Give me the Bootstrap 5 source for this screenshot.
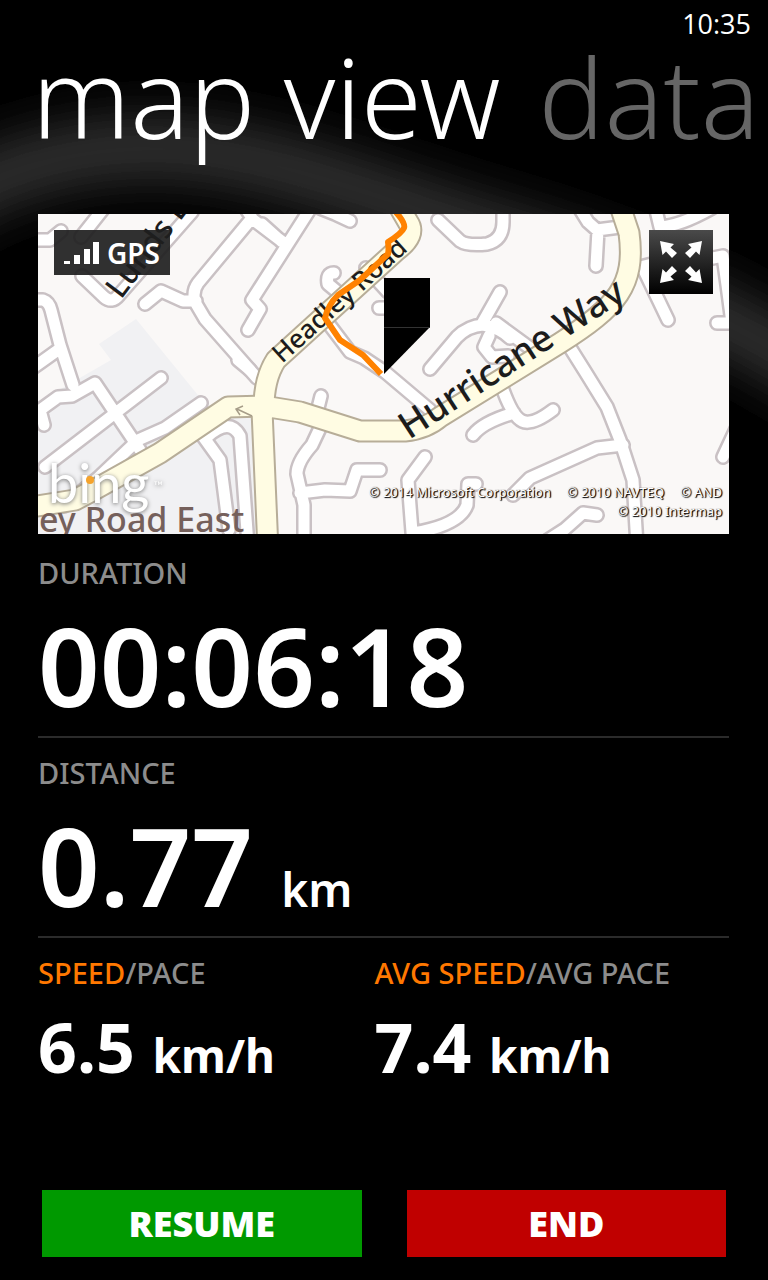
<!DOCTYPE html>
<html lang="en">
<head>
<meta charset="utf-8">
<meta name="viewport" content="width=device-width, initial-scale=1">
<title>Map view</title>
<link href="https://cdn.jsdelivr.net/npm/bootstrap@5.3.0/dist/css/bootstrap.min.css" rel="stylesheet">
<style>
body{background:#000;color:#fff;font-family:"Noto Sans","Open Sans",sans-serif;overflow-x:hidden}
.glow{width:100%;z-index:-1}
.screen{padding:0 39px 23px 38px;isolation:isolate}
.clock{font-size:27px;line-height:48px;margin-right:-22px;font-family:"Open Sans",sans-serif}
.pivots{gap:38px;height:166px;white-space:nowrap;margin-right:-39px}
.pivots h1,.pivots a{font-size:110px;line-height:96px;font-weight:350;margin:0}
.pivots h1{margin-left:-6px}
.pivots a{color:#666;text-decoration:none}
.map-chip{top:16px;left:16px;height:45px;padding:0 10px;background:rgba(30,30,30,.92);font-size:28px;font-weight:600}
.expand{top:16px;right:16px;width:64px;height:64px;border:0;background:linear-gradient(#4a4a4a,#000)}
.credits{right:7px;bottom:13px;font-size:13px;line-height:19px;text-align:right;text-shadow:1px 1px 1px #000,1px 0 1px #000}
.metric{padding:16px 0 10px}
.ruled{border-bottom:2px solid #2b2b2b}
.caption{font-size:29px;line-height:38px;font-weight:500;color:#8c8c8c;margin:0 0 14px}
.caption a{color:#ff7800;text-decoration:none}
.caption .alt{color:#8c8c8c}
.big{font-size:108px;line-height:120px;font-weight:600;margin:0}
.big small,.mid small{font-size:46px;line-height:1;font-weight:inherit}
.mid{font-size:68px;line-height:82px;font-weight:700;margin:0}
.speeds{padding-right:18px}
.actions{gap:45px;padding:0 3px 0 4px}
.actions .btn{height:67px;padding:0;border:0;border-radius:0;color:#fff;font-size:36px;line-height:67px;font-weight:900;flex:1 1 0}
.go{background:#090!important}.halt{background:#c00000!important}
</style>
<script src="https://cdn.jsdelivr.net/npm/bootstrap@5.3.0/dist/js/bootstrap.bundle.min.js"></script>
</head>
<body>
<main class="screen position-relative min-vh-100 d-flex flex-column">
<svg class="glow position-absolute top-0 start-0" viewBox="0 0 768 640" aria-hidden="true">
<defs><filter id="soft" x="-30%" y="-50%" width="160%" height="200%"><feGaussianBlur stdDeviation="26"/></filter></defs>
<path d="M-80 225C-20 170 90 140 190 150S380 200 500 235 720 310 860 400" fill="none" stroke="#383838" stroke-width="54" filter="url(#soft)"/>
</svg>
<div class="clock text-end">10:35</div>
<nav class="pivots d-flex"><h1>map view</h1><a href="#data">data</a></nav>
<section class="position-relative mb-1" aria-label="Map">
<svg class="d-block w-100" viewBox="38 214 691 320" font-family="Noto Sans, Open Sans, sans-serif">
<defs>
<g id="streets" fill="none" stroke-linecap="round" stroke-linejoin="round">
<path d="M30 300H43Q49 302 51 310L60 345 73 385M30 370L58 350M30 240H50L61 231M81 237L104 208M82 276L104 297Q112 304 119 295L192 212"/>
<path d="M145 304L161 291 183 301H196M240 200L252 218 198 283Q192 291 195 302L205 319 257 378M251 218L284 243M248 330L260 309 252 300 312 206M262 224L282 242M320 208L335 214 350 221"/>
<path d="M438 220L460 241Q467 246 487 244 503 240 503 222V205M340 294L328 284Q326 273 334 273M366 268L388 292M392 308H379M322 315L350 352 364 358 385 372 430 410"/>
<path d="M500 292L483 322M430 369L457 337Q468 326 483 325 500 328 510 338M489 336L484 347 492 357 508 356M496 323L530 348M578 206L588 222 597 230 620 227M598 230L596 266"/>
<path d="M655 206L660 227Q680 226 712 208M636 268L652 264 713 258 723 256 727 285 732 323H717M643 268L668 320M564 338L586 373 607 407 620 440 633 480 637 545"/>
<path d="M623 445L597 448 530 478 513 495M553 410Q532 426 522 421 513 417 503 390M473 435Q483 422 514 413M723 457L738 425M597 515L583 513 565 529 548 540"/>
<path d="M321 396L317 412M320 428L312 445Q297 462 297 474L304 505V545M300 493L325 490 350 491 357 470H380M425 457L408 480 413 545M413 533Q460 525 467 505L468 484H476"/>
<path d="M44 425L40 410 58 397 72 396 95 383 140 450M45 467L161 378M201 403L165 428 138 440 98 478 64 506M202 435L220 460 229 530M208 436Q230 417 240 436L248 545M250 370L238 360"/>
</g>
<g id="mainroads" fill="none" stroke-linecap="round" stroke-linejoin="round">
<path d="M25 508L75 500 92 491 160 453 228 407 263 406 300 412 360 431H405Q426 429 440 417L560 343C617 307 636 285 629 233L618 200"/>
<path d="M264 413Q263 380 276 360L397 250Q417 235 408 222L397 203M262 410Q263 430 268 550"/>
</g>
</defs>
<path fill="#faf8f7" d="M38 214h691v320H38z"/>
<path fill="#f1f1f3" d="M136 319L99 344 111 360 38 402V534H270V420L250 405H206z"/>
<use href="#streets" stroke="#c9c1c4" stroke-width="16"/>
<use href="#streets" stroke="#fff" stroke-width="11"/>
<use href="#mainroads" stroke="#b7ad98" stroke-width="23"/>
<use href="#mainroads" stroke="#fffce3" stroke-width="19"/>
<path d="M252 416L237 409M240 415L236 409 243 406" fill="none" stroke="#a69c88" stroke-width="1.5"/>
<g fill="#1c1c1c" font-weight="500">
<text transform="translate(121 300) rotate(-53)" font-size="31">Lunds L</text>
<text transform="translate(282 364) rotate(-42)" font-size="26">Headley Road</text>
<text transform="translate(409 440) rotate(-33)" font-size="37">Hurricane Way</text>
</g>
<text x="39" y="532" font-size="34" font-weight="500" fill="#75605b">ey Road East</text>
<g font-family="Lato, sans-serif" style="filter:drop-shadow(0 1px 2px #777)">
<text x="48" y="503" font-size="54" font-weight="400" fill="#fff">bing</text>
<text x="154" y="490" font-size="12" fill="#fff">™</text>
</g>
<circle cx="90" cy="480" r="4" fill="#f5a32c"/>
<path d="M394 210Q406 223 404 228T388 242Q389 250 388 254L360 280 338 295Q328 305 325 318L340 340 363 355 381 374" fill="none" stroke="#ff8200" stroke-width="6" stroke-linejoin="round"/>
<path d="M384 278h46v49l-46 47z"/><path d="M384 327.500h46" stroke="#333" stroke-width="1"/>
</svg>
<div class="map-chip position-absolute d-flex align-items-center gap-2">
<svg width="35" height="24" viewBox="0 0 35 24" fill="#fff" aria-hidden="true"><path d="M0 20h6v3H0zM10 14h6v9h-6zM20 8h6v15h-6zM29 1h6v22h-6z"/></svg>GPS</div>
<button type="button" class="expand position-absolute p-0" aria-label="Full screen map">
<svg width="64" height="64" viewBox="0 0 64 64" aria-hidden="true"><defs><path id="arrow" d="M11 11L25 14 21.500 17.500 28 23 23 28 17 21.500 13.500 25z" fill="#fff"/></defs><use href="#arrow"/><use href="#arrow" transform="matrix(-1 0 0 1 64 0)"/><use href="#arrow" transform="matrix(1 0 0 -1 0 64)"/><use href="#arrow" transform="rotate(180 32 32)"/></svg></button>
<div class="credits position-absolute"><div class="d-flex gap-3 justify-content-end"><span>© 2014 Microsoft Corporation</span><span>© 2010 NAVTEQ</span><span>© AND</span></div><div>© 2010 Intermap</div></div>
</section>
<section class="metric ruled"><h2 class="caption">DURATION</h2><p class="big">00:06:18</p></section>
<section class="metric ruled"><h2 class="caption">DISTANCE</h2><p class="big">0.77 <small>km</small></p></section>
<div class="speeds row g-0">
<section class="metric col-6"><h2 class="caption"><a href="#speed">SPEED</a>/<a class="alt" href="#pace">PACE</a></h2><p class="mid">6.5 <small>km/h</small></p></section>
<section class="metric col-6"><h2 class="caption text-nowrap"><a href="#avg-speed">AVG SPEED</a>/<a class="alt" href="#avg-pace">AVG PACE</a></h2><p class="mid">7.4 <small>km/h</small></p></section>
</div>
<div class="actions d-flex mt-auto"><button type="button" class="btn go">RESUME</button><button type="button" class="btn halt">END</button></div>
</main>
</body>
</html>
